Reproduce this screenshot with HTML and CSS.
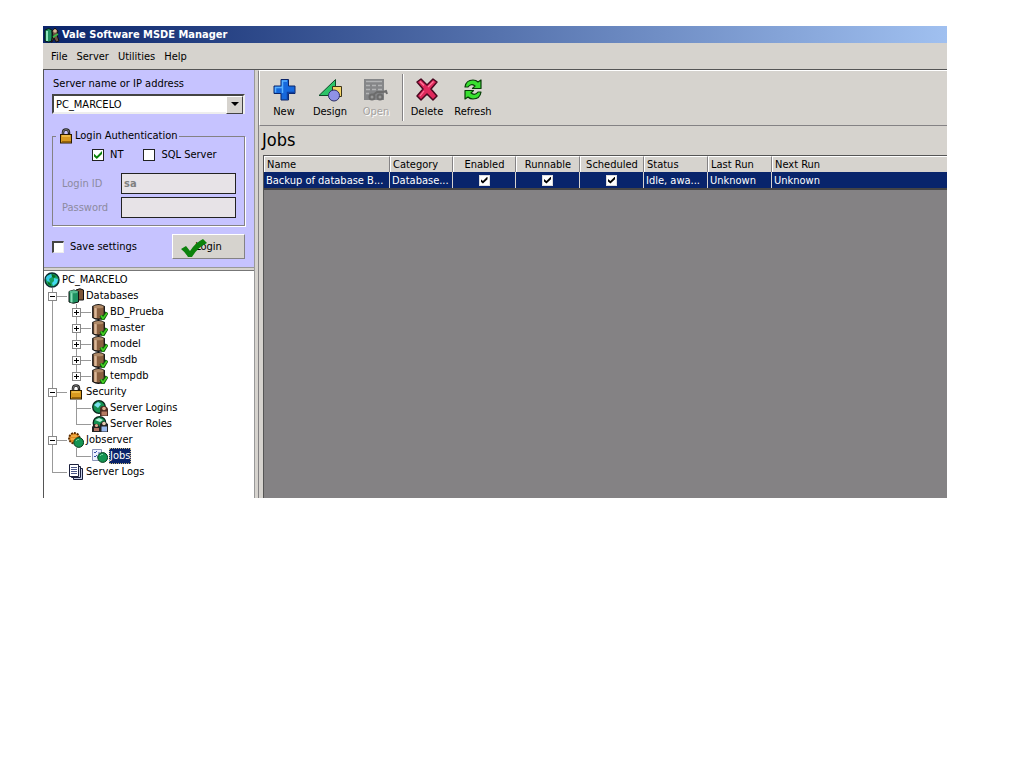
FILE: index.html
```html
<!DOCTYPE html>
<html lang="en">
<head>
  <meta charset="UTF-8" />
  <meta name="viewport" content="width=device-width, initial-scale=1.0" />
  <title>Vale Software MSDE Manager</title>
  <link rel="stylesheet" href="styles.css">
</head>
<body>
  <!-- shared icons -->
  <svg class="sprite" aria-hidden="true">
    <symbol id="i-globe" viewBox="0 0 16 16">
      <circle cx="8" cy="8" r="7" fill="#17a05c" stroke="#0b2a30" stroke-width="1.4"/>
      <path d="M3 4l4-2 1 3-3 2 1 3-3-1-1-3z" fill="#35c8e8"/>
      <path d="M10 6l4 1-1 4-4 3-1-3 2-2z" fill="#45d8f0"/>
      <path d="M8 2l4 2-2 2-2-1zM4 10l3 2 0 2-3-2z" fill="#0a6a20"/>
    </symbol>
    <symbol id="i-dbs" viewBox="0 0 16 16">
      <path d="M8 2v10h7.500V2Q12-.5 8 2z" fill="#7d5638" stroke="#111"/>
      <path d="M1 3.500v10.500q4 2.500 9.500 0V3.500q-4.500-3-9.500 0z" fill="#1f9060" stroke="#111"/>
      <path d="M3.500 5v9.500" stroke="#8ae0b8" stroke-width="2"/>
      <ellipse cx="5.700" cy="3.700" rx="4.200" ry="1.500" fill="#58bd90"/>
    </symbol>
    <symbol id="i-db" viewBox="0 0 16 16">
      <path d="M.8 2.500v11q5.500 3.500 11.500 0v-11q-6-3.500-11.500 0z" fill="#8a6040" stroke="#111" stroke-width="1.300"/>
      <path d="M3.500 4v10" stroke="#dcb898" stroke-width="2.500"/>
      <ellipse cx="6.500" cy="2.700" rx="5" ry="1.600" fill="#b08a68"/>
      <path d="M9 11.500l2 3.500 4-6.500" fill="none" stroke="#0a5a0a" stroke-width="3.400"/>
      <path d="M9 11.500l2 3L15 9" fill="none" stroke="#45d025" stroke-width="1.600"/>
    </symbol>
    <symbol id="i-lock" viewBox="0 0 16 16">
      <path d="M5 8V4.500q0-3 3-3t3 3V8" fill="none" stroke="#222" stroke-width="2.500"/>
      <path d="M5 7V4.500q0-3 3-3t3 3" fill="none" stroke="#999" stroke-width=".7"/>
      <rect x="2.500" y="6.500" width="11" height="8.500" fill="#d89a20" stroke="#2b1b00"/>
      <path d="M4 8h8" stroke="#ffd768"/>
      <path d="M4 13.500h9" stroke="#9a6308"/>
    </symbol>
    <symbol id="i-login" viewBox="0 0 16 16">
      <circle cx="7" cy="7" r="6.300" fill="#149050" stroke="#08231a" stroke-width="1.300"/>
      <path d="M2 5l4-3 3 2-3 4z" fill="#7be0ee"/>
      <path d="M8 16V9q0-3 3.500-3T16 9v7z" fill="#4b2a22"/>
      <circle cx="12" cy="8.500" r="1.800" fill="#e0b090"/>
      <path d="M9.500 11.500H15v4H9.500z" fill="#b87a62"/>
    </symbol>
    <symbol id="i-roles" viewBox="0 0 16 16">
      <circle cx="7.500" cy="7" r="6.300" fill="#149050" stroke="#08231a" stroke-width="1.300"/>
      <path d="M3 4l4-2 4 2-3 2z" fill="#b7efdc"/>
      <path d="M0 16v-5l2-3h4l2 3v5zM8 16V8l3-3 5 3v8z" fill="#222"/>
      <circle cx="4.500" cy="9.500" r="1.600" fill="#e0b090"/>
      <circle cx="12" cy="7.500" r="1.800" fill="#e8c8b0"/>
      <path d="M2 12h5v3H2z" fill="#b07060"/>
      <path d="M9.500 10.500H15v5H9.500z" fill="#98b8ee"/>
    </symbol>
    <symbol id="i-jobserver" viewBox="0 0 16 16">
      <circle cx="6.300" cy="6.300" r="5.300" fill="#e08a20" stroke="#5b2c00" stroke-width="1.800" stroke-dasharray="2 1"/>
      <path d="M3 4h6M3 7h5" stroke="#ffc868"/>
      <circle cx="10.700" cy="10.500" r="4.900" fill="#159452" stroke="#063d1c"/>
      <path d="M8 9q1-2 3-1.500" fill="none" stroke="#7ad0a0"/>
    </symbol>
    <symbol id="i-jobs" viewBox="0 0 16 16">
      <path d="M.5 1.500h9v11h-9z" fill="#eef2ff" stroke="#8a94b8"/>
      <path d="M2 4l1 1 2-2M2 8l1 1 2-2M6 5h2M5 9h1" fill="none" stroke="#3850a8"/>
      <circle cx="10.700" cy="9.500" r="4.900" fill="#159452" stroke="#063d1c"/>
      <path d="M8 8q1-2 3-1.500" fill="none" stroke="#7ad0a0"/>
    </symbol>
    <symbol id="i-logs" viewBox="0 0 16 16">
      <path d="M5.500 4.500h9v11h-9z" fill="#c8d0e8" stroke="#1a1f3c"/>
      <path d="M3.500 2.500h9v11h-9z" fill="#d8def0" stroke="#1a1f3c"/>
      <path d="M1.500.5h9v12h-9z" fill="#fff" stroke="#1a1f3c"/>
      <path d="M3 3.500h6M3 5.500h6M3 7.500h6M3 9.500h6" stroke="#4a5688"/>
    </symbol>
  </svg>

  <div class="window">
    <header class="titlebar">
      <svg width="16" height="16" viewBox="0 0 16 16" aria-hidden="true">
        <path d="M1 3v11q4 2 7 0V3Q5 0 1 3z" fill="#1f9060" stroke="#061a10"/>
        <path d="M3 4v10" stroke="#90e8c0" stroke-width="2"/>
        <path d="M8 4l3-3 3 3-1 4 2 6-3 1-2-4-2 4H7l2-6z" fill="#6a5444" stroke="#111"/>
        <circle cx="11" cy="4" r="1.800" fill="#d8b898"/>
        <path d="M9 10l5-3" stroke="#38c048" stroke-width="1.500"/>
      </svg>
      <h1>Vale Software MSDE Manager</h1>
    </header>

    <nav class="menu">
      <button type="button">File</button>
      <button type="button">Server</button>
      <button type="button">Utilities</button>
      <button type="button">Help</button>
    </nav>

    <div class="body">
      <aside class="side">
        <form class="login">
          <label for="server">Server name or IP address</label>
          <div class="combo">
            <select id="server"><option>PC_MARCELO</option></select>
          </div>

          <fieldset>
            <legend><svg class="icon" aria-hidden="true"><use href="#i-lock"/></svg>Login Authentication</legend>
            <div class="auth">
              <label><input type="checkbox" class="check green" checked>NT</label>
              <label><input type="checkbox" class="check">SQL Server</label>
            </div>
            <div class="field">
              <label for="login-id">Login ID</label>
              <input type="text" id="login-id" value="sa" disabled>
            </div>
            <div class="field">
              <label for="password">Password</label>
              <input type="password" id="password" disabled>
            </div>
          </fieldset>

          <div class="actions">
            <label><input type="checkbox" class="check sunken">Save settings</label>
            <button type="button" class="login-btn">
              Login
              <svg width="28" height="20" viewBox="0 0 28 20" aria-hidden="true"><path d="M1 11l5-3 4 5Q15 5 23 1l4 4Q18 9 12 19H8Q5 14 1 11z" fill="#0c820c"/></svg>
            </button>
          </div>
        </form>

        <ul class="tree">
          <li>
            <div class="node"><svg class="icon" aria-hidden="true"><use href="#i-globe"/></svg><span>PC_MARCELO</span></div>
            <ul>
              <li>
                <button type="button" class="toggle" aria-label="Collapse Databases"></button>
                <div class="node"><svg class="icon" aria-hidden="true"><use href="#i-dbs"/></svg><span>Databases</span></div>
                <ul>
                  <li>
                    <button type="button" class="toggle plus" aria-label="Expand BD_Prueba"></button>
                    <div class="node"><svg class="icon" aria-hidden="true"><use href="#i-db"/></svg><span>BD_Prueba</span></div>
                  </li>
                  <li>
                    <button type="button" class="toggle plus" aria-label="Expand master"></button>
                    <div class="node"><svg class="icon" aria-hidden="true"><use href="#i-db"/></svg><span>master</span></div>
                  </li>
                  <li>
                    <button type="button" class="toggle plus" aria-label="Expand model"></button>
                    <div class="node"><svg class="icon" aria-hidden="true"><use href="#i-db"/></svg><span>model</span></div>
                  </li>
                  <li>
                    <button type="button" class="toggle plus" aria-label="Expand msdb"></button>
                    <div class="node"><svg class="icon" aria-hidden="true"><use href="#i-db"/></svg><span>msdb</span></div>
                  </li>
                  <li>
                    <button type="button" class="toggle plus" aria-label="Expand tempdb"></button>
                    <div class="node"><svg class="icon" aria-hidden="true"><use href="#i-db"/></svg><span>tempdb</span></div>
                  </li>
                </ul>
              </li>
              <li>
                <button type="button" class="toggle" aria-label="Collapse Security"></button>
                <div class="node"><svg class="icon" aria-hidden="true"><use href="#i-lock"/></svg><span>Security</span></div>
                <ul>
                  <li><div class="node"><svg class="icon" aria-hidden="true"><use href="#i-login"/></svg><span>Server Logins</span></div></li>
                  <li><div class="node"><svg class="icon" aria-hidden="true"><use href="#i-roles"/></svg><span>Server Roles</span></div></li>
                </ul>
              </li>
              <li>
                <button type="button" class="toggle" aria-label="Collapse Jobserver"></button>
                <div class="node"><svg class="icon" aria-hidden="true"><use href="#i-jobserver"/></svg><span>Jobserver</span></div>
                <ul>
                  <li><div class="node selected"><svg class="icon" aria-hidden="true"><use href="#i-jobs"/></svg><span>Jobs</span></div></li>
                </ul>
              </li>
              <li><div class="node"><svg class="icon" aria-hidden="true"><use href="#i-logs"/></svg><span>Server Logs</span></div></li>
            </ul>
          </li>
        </ul>
      </aside>

      <main class="content">
        <div class="toolbar">
          <button type="button">
            <svg width="24" height="24" viewBox="0 0 24 24" aria-hidden="true">
              <path d="M9 1.500h7.500V8H23v7.500h-6.500V22H9v-6.500H2V8h7z" fill="#1668dc" stroke="#0a2468"/>
              <path d="M10.500 15V3H15M3.500 14.500v-5H10" fill="none" stroke="#58b0ff" stroke-width="1.500"/>
              <path d="M15.500 21v-6.500H22" fill="none" stroke="#0c3ea0" stroke-width="1.500"/>
            </svg>
            New
          </button>
          <button type="button">
            <svg width="24" height="24" viewBox="0 0 24 24" aria-hidden="true">
              <path d="M1 17.500L17.500 1.500v16z" fill="#2cc468" stroke="#0c4a28"/>
              <path d="M14.500 8.500h9v10h-9z" fill="#f4d468" stroke="#3c3418"/>
              <circle cx="16" cy="17.500" r="5.500" fill="#8f92e6" stroke="#2e3064"/>
            </svg>
            Design
          </button>
          <button type="button" disabled>
            <svg width="26" height="24" viewBox="0 0 26 24" aria-hidden="true">
              <path d="M1 1h20v21H1z" fill="#858688"/>
              <path d="M3 3.500h16M3 7.500h4M9 7.500h4M15 7.500h4M3 11.500h4M9 11.500h4M15 11.500h4M3 15.500h3" stroke="#b2b3b4" stroke-width="1.500"/>
              <circle cx="9" cy="19" r="2.500" fill="#999" stroke="#6c6c6c" stroke-width="2"/>
              <circle cx="17" cy="19" r="2.500" fill="#999" stroke="#6c6c6c" stroke-width="2"/>
              <path d="M10 17l4-3h6l3-1 1 3" fill="none" stroke="#6c6c6c" stroke-width="2"/>
            </svg>
            Open
          </button>
          <span class="separator"></span>
          <button type="button">
            <svg width="24" height="24" viewBox="0 0 24 24" aria-hidden="true">
              <path d="M2 4l4-3 6 6 6-6 4 3-6 7 6 7-4 4-6-6-6 6-4-4 6-7z" fill="#e0285c" stroke="#4a0820" stroke-width="1.500" stroke-linejoin="round"/>
              <path d="M5 3.500l4 4M18.500 3.500L13 9M5 18l4-5" stroke="#ff7c9c" stroke-width="1.200"/>
            </svg>
            Delete
          </button>
          <button type="button">
            <svg width="24" height="24" viewBox="0 0 24 24" aria-hidden="true">
              <path d="M4 9q1-7 8-7 3 0 5 2l3-2v8.500h-8.500L14 8q-4-3-7 1z" fill="#38e030" stroke="#083c08" stroke-width="1.200" stroke-linejoin="round"/>
              <path d="M20 14q-1 7-8 7-3 0-5-2l-3 2v-8.500h8.500L10 15q4 3 7-1z" fill="#38e030" stroke="#083c08" stroke-width="1.200" stroke-linejoin="round"/>
            </svg>
            Refresh
          </button>
        </div>

        <h2>Jobs</h2>

        <div class="grid">
          <table>
            <colgroup>
              <col class="wide"><col><col><col><col><col><col><col class="rest">
            </colgroup>
            <thead>
              <tr>
                <th>Name</th>
                <th>Category</th>
                <th class="mid">Enabled</th>
                <th class="mid">Runnable</th>
                <th class="mid">Scheduled</th>
                <th>Status</th>
                <th>Last Run</th>
                <th>Next Run</th>
              </tr>
            </thead>
            <tbody>
              <tr>
                <td>Backup of database B...</td>
                <td>Database...</td>
                <td class="mid"><input type="checkbox" class="check small" aria-label="Enabled" checked></td>
                <td class="mid"><input type="checkbox" class="check small" aria-label="Runnable" checked></td>
                <td class="mid"><input type="checkbox" class="check small" aria-label="Scheduled" checked></td>
                <td>Idle, awa...</td>
                <td>Unknown</td>
                <td>Unknown</td>
              </tr>
            </tbody>
          </table>
        </div>
      </main>
    </div>
  </div>
</body>
</html>
```

FILE: styles.css
```css
* {
  box-sizing: border-box;
}
body {
  margin: 0;
  padding: 26px 77px 26px 43px;
  background: #fff;
  color: #000;
  font: 11px/16px Tahoma, "DejaVu Sans Condensed", sans-serif;
}
button, input, select {
  font: inherit;
  color: inherit;
}
.sprite {
  display: none;
}
.icon {
  width: 16px;
  height: 16px;
  flex: none;
}

.window {
  background: #d6d3ce;
}
.titlebar {
  display: flex;
  align-items: center;
  gap: 2px;
  height: 17px;
  padding-left: 1px;
  background: linear-gradient(to right, #0a246a, #a0c0f0);
  color: #fff;
}
.titlebar h1 {
  margin: 0;
  font-size: 11px;
}
.menu {
  display: flex;
  gap: 9px;
  height: 26px;
  padding: 2px 8px 0;
}
.menu button {
  padding: 0;
  border: none;
  background: none;
}

.body {
  display: flex;
  border-top: 1px solid #555;
}
.side {
  display: flex;
  flex-direction: column;
  width: 212px;
  flex: none;
  border-left: 1px solid #555;
  border-right: 1px solid #999;
}
.login {
  padding: 6px 9px 8px 8px;
  background: #c6c3ff;
  border-bottom: 1px solid #999;
}
.login > label {
  display: block;
  padding-left: 1px;
}
.combo {
  position: relative;
  margin-top: 2px;
}
.combo select {
  display: block;
  width: 100%;
  height: 20px;
  padding: 1px 2px 0;
  appearance: none;
  border: 2px solid #444;
  border-right-color: #eee;
  border-bottom-color: #eee;
  border-radius: 0;
  background: #fff;
}
/* arrow button of the combo box */
.combo::before {
  content: "";
  position: absolute;
  top: 2px;
  right: 2px;
  width: 15px;
  height: 16px;
  background: #d6d3ce;
  border: 1px solid #fff;
  border-right-color: #444;
  border-bottom-color: #444;
  pointer-events: none;
}
.combo::after {
  content: "";
  position: absolute;
  top: 8px;
  right: 6px;
  border: 4px solid transparent;
  border-top-color: #000;
  border-bottom: none;
  pointer-events: none;
}
fieldset {
  margin: 14px 0 0;
  padding: 3px 8px 7px 9px;
  border: 1px solid #848284;
  box-shadow: 1px 1px 0 #fff;
}
legend {
  display: flex;
  align-items: center;
  gap: 1px;
  margin-left: -6px;
  padding: 0 2px;
}
.auth {
  display: flex;
  gap: 20px;
  padding-left: 30px;
}
.auth label, .actions label {
  display: flex;
  align-items: center;
  gap: 6px;
}
.field {
  display: flex;
  align-items: center;
  justify-content: space-between;
  margin-top: 3px;
  color: #8c8aa0;
}
.auth + .field {
  margin-top: 10px;
}
.field input {
  width: 115px;
  height: 21px;
  padding: 0 2px;
  border: 1px solid #222;
  border-radius: 0;
  background: #e7e3e7;
  color: #808080;
  font-weight: bold;
}
.actions {
  display: flex;
  align-items: center;
  justify-content: space-between;
  margin-top: 8px;
}
.login-btn {
  position: relative;
  width: 73px;
  height: 25px;
  padding: 0;
  background: #d6d3ce;
  border: 1px solid #fff;
  border-right-color: #848284;
  border-bottom-color: #848284;
}
.login-btn svg {
  position: absolute;
  left: 7px;
  top: 3px;
}

.check {
  position: relative;
  width: 12px;
  height: 12px;
  margin: 0;
  appearance: none;
  border: 1px solid #222;
  background: #fff;
}
.check.sunken {
  border-width: 2px 1px 1px 2px;
  border-color: #444 #eee #eee #444;
}
.check.small {
  width: 11px;
  height: 11px;
  border-color: #ddd;
}
.check:checked::after {
  content: "";
  position: absolute;
  inset: 1px;
  background: #000;
  clip-path: polygon(0 35%, 35% 65%, 100% 0, 100% 38%, 35% 100%, 0 70%);
}
.check.green:checked::after {
  background: #0c820c;
}

.tree, .tree ul {
  margin: 0;
  padding: 0;
  list-style: none;
}
.tree {
  flex: 1;
  margin-top: 2px;
  padding: 1px 0 18px;
  border-top: 1px solid #777;
  background: #fff;
}
.tree ul li {
  position: relative;
  padding-left: 24px;
}
.tree ul li::before {
  content: "";
  position: absolute;
  left: 8px;
  top: 0;
  height: 100%;
  border-left: 1px solid #999;
}
.tree ul li:last-child::before {
  height: 8px;
}
.tree ul li::after {
  content: "";
  position: absolute;
  left: 8px;
  top: 8px;
  width: 15px;
  border-top: 1px solid #999;
}
.node {
  display: flex;
  align-items: center;
  gap: 1px;
  height: 16px;
}
.node span {
  padding: 0 1px;
}
.node.selected span {
  background: #0a246a;
  color: #fff;
  outline: 1px dotted #c8b880;
  outline-offset: -1px;
}
.toggle {
  position: absolute;
  z-index: 1;
  left: 4px;
  top: 4px;
  width: 9px;
  height: 9px;
  padding: 0;
  border: 1px solid #888;
  background: linear-gradient(#000, #000) center / 5px 1px no-repeat #fff;
}
.toggle.plus {
  background: linear-gradient(#000, #000) center / 5px 1px no-repeat, linear-gradient(#000, #000) center / 1px 5px no-repeat #fff;
}

.content {
  display: flex;
  flex-direction: column;
  flex: 1;
  min-width: 0;
  margin-left: 3px;
  border-left: 1px solid #848284;
  border-top: 1px solid #fff;
}
.toolbar {
  display: flex;
  height: 55px;
  padding: 3px 1px 4px;
  border-left: 1px solid #fff;
  border-bottom: 1px solid #848284;
}
.toolbar button {
  display: flex;
  flex-direction: column;
  align-items: center;
  gap: 2px;
  width: 46px;
  padding: 4px 0 0;
  border: none;
  background: none;
}
.toolbar button:disabled {
  color: #a5a2a0;
  text-shadow: 1px 1px 0 #fff;
}
.separator {
  width: 2px;
  margin: 0 0 0 3px;
  border-left: 1px solid #848284;
  border-right: 1px solid #fff;
}
.content h2 {
  margin: 0;
  padding: 4px 3px 5px;
  font-size: 18px;
  font-weight: normal;
  line-height: 20px;
}
.grid {
  flex: 1;
  margin-left: 4px;
  border-top: 1px solid #555;
  border-left: 1px solid #555;
  background: #848284;
}
table {
  width: 100%;
  table-layout: fixed;
  border-collapse: separate;
  border-spacing: 0;
  border-bottom: 2px solid #444;
}
col {
  width: 63px;
}
col:nth-child(n+4) {
  width: 64px;
}
col.wide {
  width: 126px;
}
col.rest:last-child {
  width: auto;
}
th, td {
  height: 16px;
  padding: 0 2px;
  border-right: 1px solid #848284;
  font-weight: normal;
  line-height: 15px;
  text-align: left;
  white-space: nowrap;
  overflow: hidden;
}
th {
  background: #d6d3ce;
  border-top: 1px solid #fff;
  border-left: 1px solid #fff;
}
td {
  background: #08246b;
  color: #fff;
  border-right-color: #d6d3ce;
}
th:last-child, td:last-child {
  border-right: none;
}
.mid {
  text-align: center;
}
td .check {
  display: block;
  margin: 0 auto;
}
```
